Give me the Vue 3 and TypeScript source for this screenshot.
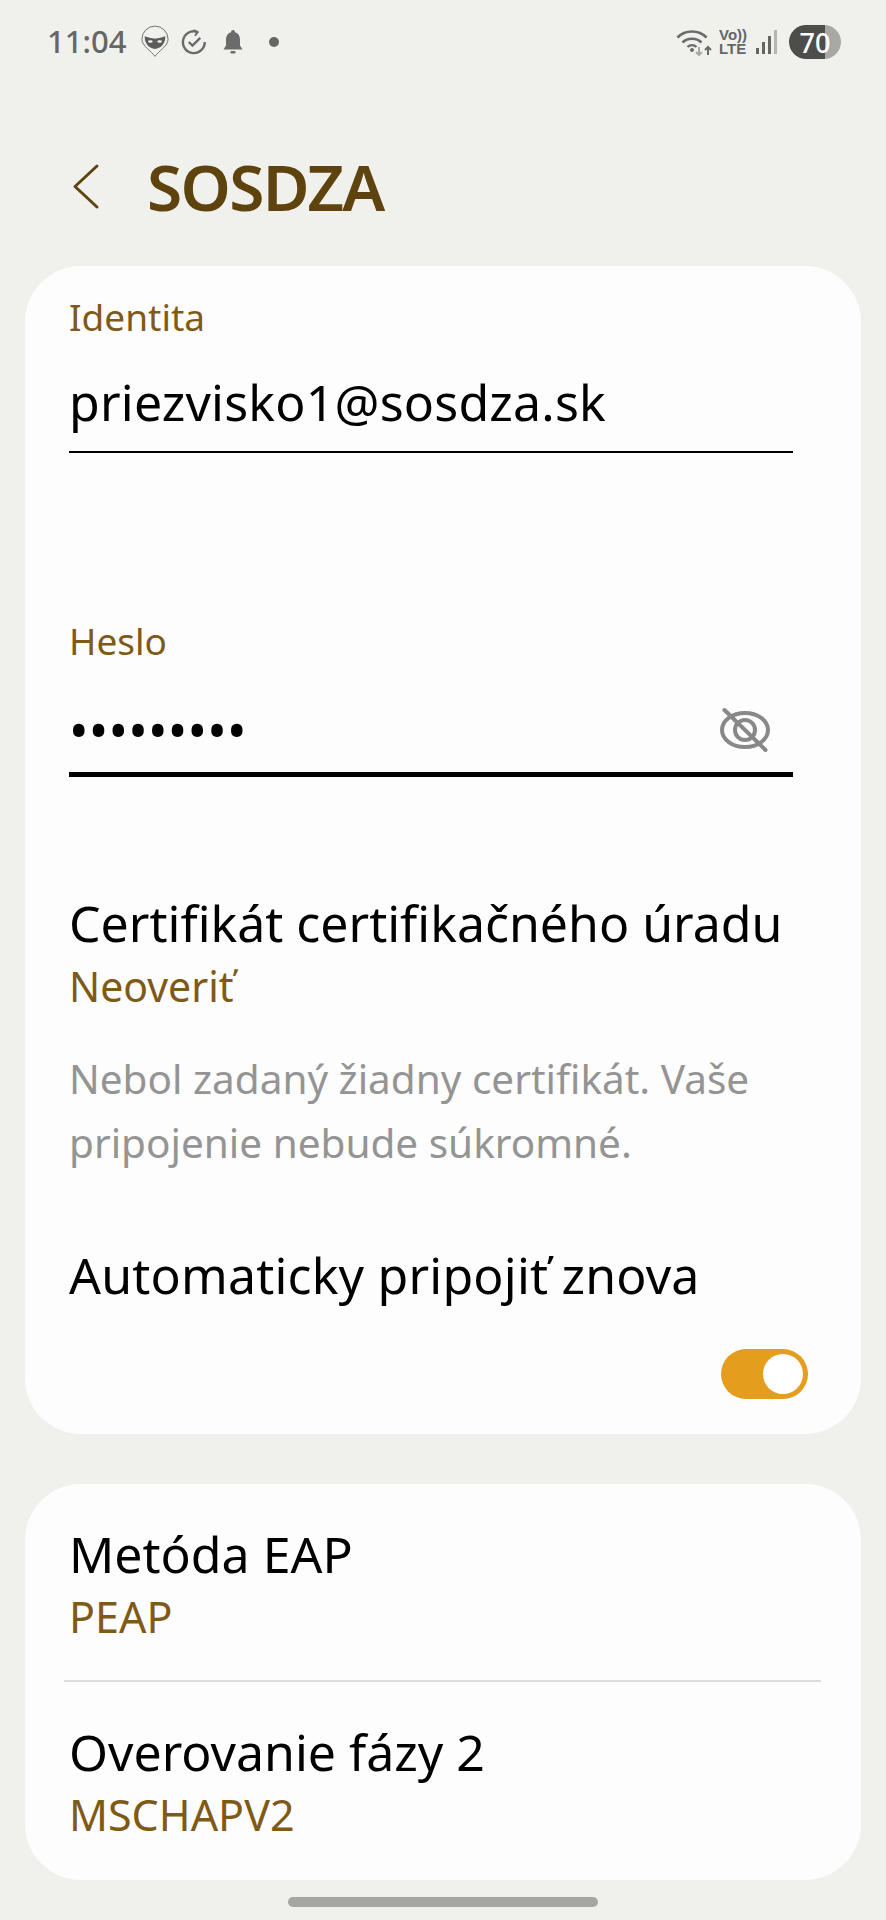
<script setup lang="ts">
const rows = [
  { title: 'Metóda EAP', value: 'PEAP' },
  { title: 'Overovanie fázy 2', value: 'MSCHAPV2' },
]
</script>

<template>
  <main class="page">
    <div class="status">
      <div class="status-left">
        <span class="time">11:04</span>
        <svg class="st-mask" width="28" height="33" viewBox="0 0 30 34">
          <path d="M15 33C11 27 1 22 1 14.500A14 14 0 0 1 29 14.500C29 22 19 27 15 33Z" fill="none" stroke="#6b6b6b" stroke-width="1" />
          <path d="M4 11.500C9 13.500 12 13.500 15 14C18 13.500 21 13.500 26 11.500C26.500 19 21 25 15 25C9 25 3.500 19 4 11.500Z" fill="#5c5c5c" />
          <ellipse cx="10" cy="17" rx="2.500" ry="1.300" fill="#f0f1ec" />
          <ellipse cx="20" cy="17" rx="2.500" ry="1.300" fill="#f0f1ec" />
        </svg>
        <svg class="st-check" width="27" height="28" viewBox="0 0 26 26" fill="none" stroke="#6b6b6b" stroke-width="2.300">
          <path d="M16.500 3.200A10.500 10.500 0 1 0 23.800 13" />
          <path d="M13 1.500L17 3.500L14.500 7" stroke-width="2" />
          <path d="M8.500 13L12 16.500L19.500 9" />
        </svg>
        <svg class="st-bell" width="22" height="26" viewBox="0 0 22 26" fill="#6b6b6b">
          <path d="M11 1C12.300 1 13 2 13 3.300C16.500 4.300 18 7.300 18 11V16.500L20.500 20.500H1.500L4 16.500V11C4 7.300 5.500 4.300 9 3.300C9 2 9.700 1 11 1Z" />
          <rect x="8.500" y="22" width="5" height="2.500" rx="1.200" />
        </svg>
        <span class="st-dot"></span>
      </div>
      <div class="status-right">
        <svg width="38" height="28" viewBox="0 0 38 28" fill="none">
          <path d="M1.500 9.500C9 1.500 23 1.500 30.500 9.500" stroke="#6b6b6b" stroke-width="2.600" />
          <path d="M6.500 14.500C11.500 9.500 20.500 9.500 25.500 14.500" stroke="#6b6b6b" stroke-width="2.600" />
          <path d="M11.500 19C14 16.500 18 16.500 20.500 19" stroke="#6b6b6b" stroke-width="2.400" />
          <circle cx="16" cy="22" r="2" fill="#6b6b6b" />
          <path d="M23 19V27M20 24L23 27L26 24" stroke="#a8a8a8" stroke-width="2" />
          <path d="M32 27V19M29 22L32 19L35 22" stroke="#6b6b6b" stroke-width="2" />
        </svg>
        <span class="volte"><span>Vo))</span><span>LTE</span></span>
        <div class="signal">
          <i class="b1"></i><i class="b2"></i><i class="b3"></i><i class="b4"></i>
        </div>
        <div class="battery"><span>70</span></div>
      </div>
    </div>

    <header class="head">
      <svg class="back" width="28" height="48" viewBox="0 0 28 48" fill="none">
        <path d="M25 3L3 23.500L25 44" stroke="#5f430f" stroke-width="3" stroke-linecap="round" stroke-linejoin="round" />
      </svg>
      <h1>SOSDZA</h1>
    </header>

    <section class="card first">
      <label class="label">Identita</label>
      <div class="input thin">priezvisko1@sosdza.sk</div>

      <label class="label heslo">Heslo</label>
      <div class="input thick">
        <span class="dots">•••••••••</span>
        <svg class="eye" width="54" height="48" viewBox="0 0 54 48" fill="none" stroke="#888888" stroke-width="4">
          <ellipse cx="27" cy="24" rx="23" ry="17" />
          <circle cx="27" cy="24" r="10" />
          <path d="M6.500 4L47.500 44" stroke-linecap="round" />
        </svg>
      </div>

      <div class="title cert">Certifikát certifikačného úradu</div>
      <div class="value">Neoveriť</div>
      <p class="note">Nebol zadaný žiadny certifikát. Vaše pripojenie nebude súkromné.</p>

      <div class="title auto">Automaticky pripojiť znova</div>
      <div class="toggle-row">
        <div class="toggle"><span></span></div>
      </div>
    </section>

    <section class="card second">
      <template v-for="(r, i) in rows" :key="r.title">
        <div v-if="i > 0" class="sep"></div>
        <div class="row">
          <div class="title">{{ r.title }}</div>
          <div class="value">{{ r.value }}</div>
        </div>
      </template>
    </section>

    <div class="home"></div>
  </main>
</template>

<style>
html,
body {
  background: #f0f1ec;
}
</style>

<style scoped>
.page {
  width: 886px;
  height: 1920px;
  background: #f0f1ec;
  font-family: 'Noto Sans', 'Open Sans', sans-serif;
  overflow: hidden;
  display: flex;
  flex-direction: column;
}

.status {
  height: 84px;
  display: flex;
  justify-content: space-between;
  align-items: center;
  padding: 0 45px 0 47px;
  box-sizing: border-box;
}

.status-left,
.status-right {
  display: flex;
  align-items: center;
}

.time {
  font-size: 31px;
  font-weight: 500;
  color: #666;
  margin-right: 15px;
  margin-top: -3px;
}

.st-mask {
  margin-top: -1px;
}

.st-check {
  margin-left: 11px;
}

.st-bell {
  margin-left: 15px;
}

.st-dot {
  width: 10px;
  height: 10px;
  border-radius: 50%;
  background: #666;
  margin-left: 25px;
}

.volte {
  display: flex;
  flex-direction: column;
  width: 26px;
  font-size: 15px;
  font-weight: 700;
  line-height: 14px;
  color: #666;
  margin-left: 5px;
  font-family: 'Liberation Sans', sans-serif;
}

.signal {
  display: flex;
  align-items: flex-end;
  gap: 3px;
  height: 24px;
  margin-left: 11px;
}

.signal i {
  width: 3px;
  display: block;
  background: #666;
}

.signal .b1 { height: 6px; }
.signal .b2 { height: 12px; }
.signal .b3 { height: 18px; }
.signal .b4 { height: 24px; background: #b5b5b5; }

.battery {
  width: 52px;
  height: 34px;
  margin-left: 12px;
  border-radius: 17px;
  background: linear-gradient(90deg, #4d4d4b 69%, #a8a8a6 69%);
  display: flex;
  align-items: center;
  justify-content: center;
  color: #fff;
  font-size: 27px;
  font-weight: 500;
}

.head {
  height: 104px;
  margin-top: 51px;
  display: flex;
  align-items: center;
  padding-left: 72px;
}

.head h1 {
  margin: -2px 0 0 47px;
  font-size: 64px;
  font-weight: 600;
  letter-spacing: -1.700px;
  color: #5f430f;
}

.card {
  background: #fdfdfd;
  margin: 0 25px;
  border-radius: 56px;
  box-sizing: border-box;
}

.first {
  margin-top: 27px;
  height: 1168px;
  padding: 28px 44px 0;
  display: flex;
  flex-direction: column;
}

.label {
  font-size: 37px;
  line-height: 46px;
  color: #7f5a17;
}

.input {
  font-size: 50px;
  letter-spacing: 0.200px;
  color: #000;
  height: 113px;
  padding-top: 12px;
  margin-right: 24px;
  box-sizing: border-box;
  display: flex;
  justify-content: space-between;
  align-items: center;
  border-bottom: 2px solid #000;
}

.input.thick {
  padding-top: 23px;
  border-bottom-width: 5px;
}

.heslo {
  margin-top: 165px;
}

.dots {
  font-size: 52px;
}

.eye {
  margin-right: 21px;
}

.title {
  font-size: 50px;
  line-height: 64px;
  color: #000;
  white-space: nowrap;
}

.cert {
  margin-top: 114px;
}

.value {
  margin-top: 6px;
  font-size: 41px;
  line-height: 50px;
  color: #7f5a17;
}

.note {
  margin: 36px 0 0;
  font-size: 40.500px;
  line-height: 64px;
  color: #949494;
}

.auto {
  margin-top: 68px;
  letter-spacing: 0.200px;
}

.toggle-row {
  display: flex;
  justify-content: flex-end;
  margin-top: 42px;
  padding-right: 9px;
}

.toggle {
  width: 87px;
  height: 50px;
  border-radius: 25px;
  background: #e49d1d;
  display: flex;
  justify-content: flex-end;
  align-items: center;
  padding-right: 5px;
  box-sizing: border-box;
}

.toggle span {
  width: 40px;
  height: 40px;
  border-radius: 50%;
  background: #fff;
}

.second {
  margin-top: 50px;
  height: 396px;
  padding: 0 40px 0 39px;
}

.row {
  height: 194px;
  padding: 38px 5px 0;
  box-sizing: border-box;
}

.row .value {
  font-size: 43px;
}

.sep {
  height: 2px;
  background: #dddddb;
}

.row:first-child {
  height: 196px;
}

.home {
  width: 310px;
  height: 10px;
  border-radius: 5px;
  background: #a5a5a2;
  margin: 17px auto 0;
}
</style>
